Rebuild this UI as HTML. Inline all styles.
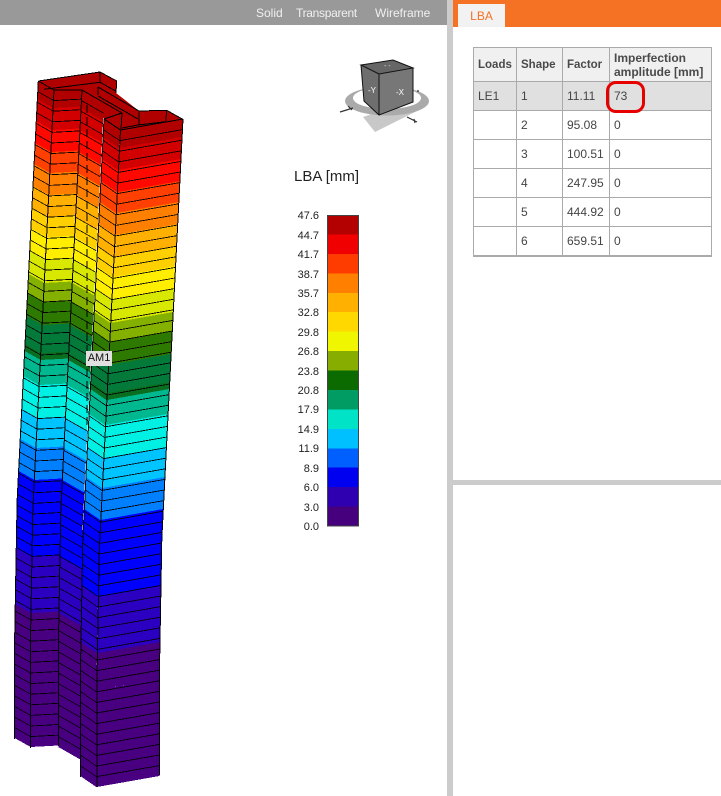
<!DOCTYPE html>
<html>
<head>
<meta charset="utf-8">
<style>
html,body{margin:0;padding:0;background:#fff;width:721px;height:796px;overflow:hidden}
body{position:relative;font-family:"Liberation Sans",sans-serif}
.a{position:absolute}
#tb{left:0;top:0;width:447px;height:25px;background:#999}
#tb span{position:absolute;top:5px;font-size:12px;line-height:16px;color:#f0f0f0;white-space:nowrap}
#vs{left:447px;top:0;width:6px;height:796px;background:#ccc}
#hs{left:453px;top:480px;width:268px;height:5px;background:#ccc}
#hd{left:453px;top:0;width:268px;height:27px;background:#f57225}
#tab{left:458px;top:4px;width:47px;height:23px;background:#f2f2f2;color:#f57225;font-size:12px;line-height:24px;text-align:center}
table{position:absolute;left:473px;top:47px;border-collapse:collapse;table-layout:fixed;width:238px;font-size:12px;color:#444;border:1px solid #aaa;border-bottom:2px solid #aaa;outline:0}
td,th{border:1px solid #aaa;padding:0 0 0 4px;text-align:left;height:28px;box-sizing:content-box;white-space:nowrap}
th{background:#f0f0f0;font-weight:bold;color:#4a4a4a;height:33px;line-height:14px;font-size:11.5px}
tr.s td{background:#e0e0e0}
#dbl{left:711px;top:47px;width:1px;height:209px;background:#aaa}
#red{left:606px;top:81px;width:33px;height:26px;border:3.5px solid #e60000;border-radius:10px}
.l{position:absolute;left:280px;width:39px;text-align:right;font-size:11px;line-height:14px;color:#222}
#am{left:86px;top:351px;width:26px;height:15px;background:#e0e0e0;color:#111;font-size:11px;line-height:15px;text-align:center}
#ti{left:294px;top:168px;font-size:15px;line-height:18px;color:#222;white-space:nowrap}
svg{position:absolute;left:0;top:0}
</style>
</head>
<body>
<svg width="447" height="796" viewBox="0 0 447 796">
<defs>
<g id="A" shape-rendering="crispEdges">
<rect width="1" y="0" height="18" fill="#b00000"/>
<rect width="1" y="18" height="22" fill="#d20000"/>
<rect width="1" y="40" height="22" fill="#ff0800"/>
<rect width="1" y="62" height="21" fill="#ff4000"/>
<rect width="1" y="83" height="22" fill="#ff8000"/>
<rect width="1" y="105" height="22" fill="#ffb000"/>
<rect width="1" y="127" height="20" fill="#ffd000"/>
<rect width="1" y="147" height="23" fill="#ffee00"/>
<rect width="1" y="170" height="23" fill="#d8e800"/>
<rect width="1" y="193" height="19" fill="#84b000"/>
<rect width="1" y="212" height="23" fill="#2e7a00"/>
<rect width="1" y="235" height="28" fill="#047a3a"/>
<rect width="1" y="263" height="7" fill="#0a6e20"/>
<rect width="1" y="270" height="25" fill="#00b890"/>
<rect width="1" y="295" height="33" fill="#00f0e4"/>
<rect width="1" y="328" height="30" fill="#00c4ff"/>
<rect width="1" y="358" height="32" fill="#0080ff"/>
<rect width="1" y="390" height="30" fill="#0000ff"/>
<path fill="none" stroke="#000" stroke-width=".85" d="M0 10.6H1M0 21.2H1M0 31.8H1M0 42.4H1M0 53H1M0 63.6H1M0 74.2H1M0 84.8H1M0 95.4H1M0 106H1M0 116.6H1M0 127.2H1M0 137.8H1M0 148.4H1M0 159H1M0 169.6H1M0 180.2H1M0 190.8H1M0 201.4H1M0 212H1M0 222.6H1M0 233.2H1M0 243.8H1M0 254.4H1M0 265H1M0 275.6H1M0 286.2H1M0 296.8H1M0 307.4H1M0 318H1M0 328.6H1M0 339.2H1M0 349.8H1M0 360.4H1M0 371H1M0 381.6H1M0 392.2H1M0 402.8H1M0 413.4H1"/>
</g>
<g id="B" shape-rendering="crispEdges">
<rect width="1" y="420" height="47" fill="#0000ff"/>
<rect width="1" y="467" height="56" fill="#2c00c0"/>
<rect width="1" y="523" height="37" fill="#480080"/>
<path fill="none" stroke="#000" stroke-width=".85" d="M0 424H1M0 434.6H1M0 445.2H1M0 455.8H1M0 466.4H1M0 477H1M0 487.6H1M0 498.2H1M0 508.8H1M0 519.4H1M0 530H1M0 540.6H1M0 551.2H1"/>
</g>
<g id="C" shape-rendering="crispEdges">
<rect width="1" y="560" height="97" fill="#480080"/>
<path fill="none" stroke="#000" stroke-width=".85" d="M0 561.8H1M0 572.4H1M0 583H1M0 593.6H1M0 604.2H1M0 614.8H1M0 625.4H1M0 636H1M0 646.6H1"/>
</g>
</defs>

<!-- cap -->
<polygon points="38,81 100,72 117,81 116,93 139,111 167,110 183,119 120,130 104,119 82,90 54,90" fill="#b00000"/>

<!-- left -->
<use href="#A" transform="matrix(16 9 -.0505 1 38.3 81)"/>
<use href="#B" transform="matrix(16 9 -.018 1 24.66 81)"/>
<use href="#C" transform="matrix(16 9 0 1 14.6 81)"/>
<!-- middle -->
<use href="#A" transform="matrix(28 -1.5 -.0505 1 54 90)"/>
<use href="#B" transform="matrix(28 -1.5 -.018 1 40.36 90)"/>
<use href="#C" transform="matrix(28 -1.5 0 1 30.3 90)"/>
<!-- web -->
<use href="#A" transform="matrix(22 12.5 -.0505 1 82 90)"/>
<use href="#B" transform="matrix(22 12.5 -.018 1 68.36 90)"/>
<use href="#C" transform="matrix(22 12.5 0 1 58.3 90)"/>
<!-- hidden dashed edge -->
<line x1="87" y1="105" x2="87" y2="427" stroke="#000" stroke-width="1" stroke-dasharray="8 4" shape-rendering="crispEdges"/>
<!-- flange side -->
<use href="#A" transform="matrix(16 11 -.0505 1 104 119)"/>
<use href="#B" transform="matrix(16 11 -.018 1 90.36 119)"/>
<use href="#C" transform="matrix(16 11 0 1 80.3 119)"/>
<!-- right -->
<use href="#A" transform="matrix(62.5 -11 -.0505 1 120.5 130)"/>
<use href="#B" transform="matrix(62.5 -11 -.018 1 106.86 130)"/>
<use href="#C" transform="matrix(62.5 -11 0 1 96.8 130)"/>

<!-- vertical edges -->
<path fill="none" stroke="#000" stroke-width="1" shape-rendering="crispEdges" d="M38.3 81L17.1 501L14.6 641V739M54 90L32.8 510L30.3 650V748M82 90L60.8 510L58.3 650V746M104 119L82.8 539L80.3 679V777M120.5 130L99.3 550L96.8 690V787M183 119L161.8 539L159.3 679V775"/>

<!-- cap lines -->
<path fill="none" stroke="#000" stroke-width="1" shape-rendering="crispEdges" d="M38.3 81L100 72L116.7 81L116 93M44 89.3L100 82.3L116.5 91.5M100 72V82M98 87V95M98 87L139 111V125M139 111L166.7 110.3L182.7 119.3M166.7 110.3L165.7 121.7M98 96L138 119M82 90L122 113M104 119L122 113L121 129M122 128L138 125L165.7 121.7M38.3 81L54 90H82M104 119L120.5 130L183 119"/>

<!-- gizmo -->
<polygon points="363,117 375,132 423,108 400,104" fill="#c8c8c8"/>
<ellipse cx="387" cy="101" rx="42" ry="14.5" fill="#aaa"/>
<ellipse cx="387" cy="98" rx="34" ry="11" fill="#fff"/>
<polygon points="361,65 393,60 413,68 379,74" fill="#666"/>
<polygon points="361,65 379,74 379,115 364,101" fill="#6e6e6e"/>
<polygon points="379,74 413,68 413,102 379,115" fill="#777"/>
<path fill="none" stroke="#111" stroke-width="1" d="M361 65L393 60L413 68L379 74ZM379 74V115M361 65L364 101L379 115L413 102V68"/>
<path fill="none" stroke="#333" stroke-width="1.2" d="M340 112L353 108M348 106L352 110M407 117L417 122M414 119L415 123M417 91L419 91"/>
<text x="368" y="93" font-size="8" fill="#fff" font-family="Liberation Sans">-Y</text>
<text x="396" y="95" font-size="8" fill="#fff" font-family="Liberation Sans">-X</text>
<text x="384" y="68" font-size="7" fill="#ddd" font-family="Liberation Sans">- -</text>

<!-- legend -->
<g shape-rendering="crispEdges">
<rect x="327" y="215" width="32" height="20" fill="#b30000"/>
<rect x="327" y="234.4" width="32" height="20" fill="#f00000"/>
<rect x="327" y="253.9" width="32" height="20" fill="#ff3c00"/>
<rect x="327" y="273.3" width="32" height="20" fill="#ff7f00"/>
<rect x="327" y="292.8" width="32" height="20" fill="#ffb000"/>
<rect x="327" y="312.2" width="32" height="20" fill="#ffd800"/>
<rect x="327" y="331.6" width="32" height="20" fill="#f0f500"/>
<rect x="327" y="351.1" width="32" height="20" fill="#86ad00"/>
<rect x="327" y="370.5" width="32" height="20" fill="#0b6b00"/>
<rect x="327" y="390" width="32" height="20" fill="#009c64"/>
<rect x="327" y="409.4" width="32" height="20" fill="#00e3c6"/>
<rect x="327" y="428.8" width="32" height="20" fill="#00c0ff"/>
<rect x="327" y="448.3" width="32" height="20" fill="#0060ff"/>
<rect x="327" y="467.7" width="32" height="20" fill="#0000f0"/>
<rect x="327" y="487.2" width="32" height="20" fill="#2f00b0"/>
<rect x="327" y="506.6" width="32" height="19.4" fill="#46007e"/>
<rect x="327.5" y="215.5" width="31" height="310.5" fill="none" stroke="#444"/>
</g>
</svg>

<div class="a" id="ti">LBA [mm]</div>
<div class="l" style="top:209px">47.6</div>
<div class="l" style="top:229px">44.7</div>
<div class="l" style="top:248px">41.7</div>
<div class="l" style="top:268px">38.7</div>
<div class="l" style="top:287px">35.7</div>
<div class="l" style="top:306px">32.8</div>
<div class="l" style="top:326px">29.8</div>
<div class="l" style="top:345px">26.8</div>
<div class="l" style="top:365px">23.8</div>
<div class="l" style="top:384px">20.8</div>
<div class="l" style="top:403px">17.9</div>
<div class="l" style="top:423px">14.9</div>
<div class="l" style="top:442px">11.9</div>
<div class="l" style="top:462px">8.9</div>
<div class="l" style="top:481px">6.0</div>
<div class="l" style="top:501px">3.0</div>
<div class="l" style="top:520px">0.0</div>

<div class="a" id="am">AM1</div>

<div class="a" id="tb">
<span style="left:256px">Solid</span>
<span style="left:296px;letter-spacing:-.3px">Transparent</span>
<span style="left:375px">Wireframe</span>
</div>
<div class="a" id="vs"></div>
<div class="a" id="hs"></div>
<div class="a" id="hd"></div>
<div class="a" id="tab">LBA</div>

<table>
<colgroup><col style="width:43px"><col style="width:46px"><col style="width:47px"><col style="width:102px"></colgroup>
<tr><th>Loads</th><th>Shape</th><th>Factor</th><th style="font-size:12px">Imperfection<br>amplitude [mm]</th></tr>
<tr class="s"><td>LE1</td><td>1</td><td>11.11</td><td>73</td></tr>
<tr><td></td><td>2</td><td>95.08</td><td>0</td></tr>
<tr><td></td><td>3</td><td>100.51</td><td>0</td></tr>
<tr><td></td><td>4</td><td>247.95</td><td>0</td></tr>
<tr><td></td><td>5</td><td>444.92</td><td>0</td></tr>
<tr><td></td><td>6</td><td>659.51</td><td>0</td></tr>
</table>
<div class="a" id="dbl"></div>
<div class="a" id="red"></div>
</body>
</html>
